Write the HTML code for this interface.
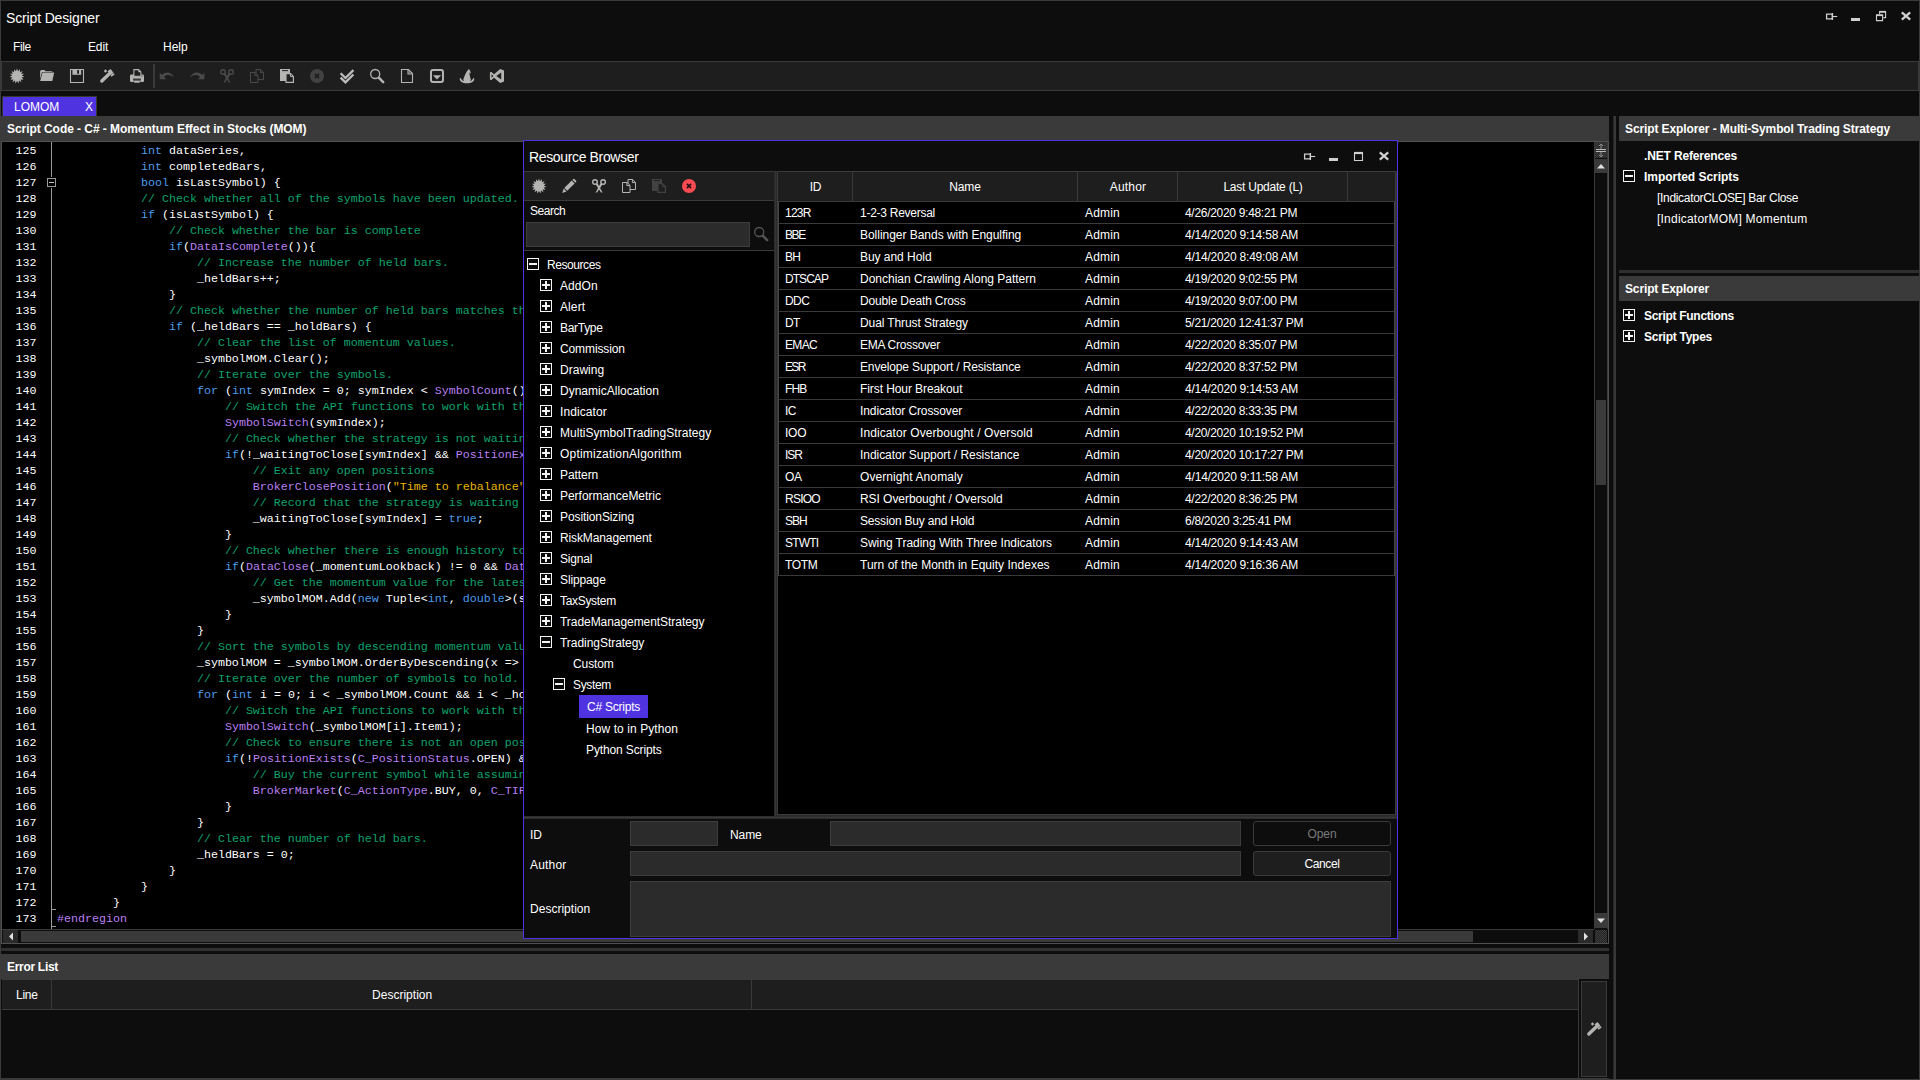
<!DOCTYPE html>
<html lang="en">
<head>
<meta charset="utf-8">
<title>Script Designer</title>
<style>
*{box-sizing:border-box;margin:0;padding:0}
html,body{width:1920px;height:1080px;overflow:hidden;background:#0d0d0d}
body{position:relative;font-family:"Liberation Sans",sans-serif;font-size:12px;color:#fff}
.abs,.abs>*{position:absolute}
#win{position:absolute;left:0;top:0;width:1920px;height:1080px;border:1px solid #3a3a3a;pointer-events:none;z-index:50}
.t{position:absolute;white-space:nowrap;line-height:16px;height:16px}
.b{font-weight:bold}
.box{position:absolute}
.hdr{position:absolute;background:#3a3a3a}
.tb{position:absolute;background:#1e1e1e;border:1px solid #3a3a3a}
.ico{position:absolute;width:16px;height:16px;overflow:visible}
.inp{position:absolute;background:#2b2b2b;border:1px solid #3d3d3d}
.pm{position:absolute;width:12px;height:12px;border:1px solid #f4f4f4;background:#0a0a0a}
.pm i{position:absolute;left:1px;top:4px;width:8px;height:2px;background:#f4f4f4}
.pm b{position:absolute;left:4px;top:1px;width:2px;height:8px;background:#f4f4f4}
#code{position:absolute;left:2px;top:141px;width:1592px;height:788px;background:#000;overflow:hidden;font-family:"Liberation Mono",monospace;font-size:11.665px;color:#fff}
#code .ln{position:absolute;left:0;height:16px;line-height:16px;white-space:pre}
#code .n{position:absolute;left:13.5px;width:21px}
#code .c{position:absolute;left:55px}
.k{color:#4c9bea}.m{color:#0ea36c}.f{color:#b97ff0}.s{color:#e8b600}
</style>
</head>
<body>
<!-- title bar -->
<div class="t" id="title" style="letter-spacing:-0.147px;left:6px;top:9px;font-size:14px;line-height:18px;height:18px">Script Designer</div>
<!-- menu -->
<div class="t" id="mFile" style="letter-spacing:-0.351px;left:13px;top:39px">File</div>
<div class="t" id="mEdit" style="letter-spacing:-0.145px;left:88px;top:39px">Edit</div>
<div class="t" id="mHelp" style="letter-spacing:0.017px;left:163px;top:39px">Help</div>
<!-- main toolbar -->
<div class="tb" style="left:1px;top:61px;width:1918px;height:30px"></div>
<div class="box" style="left:153px;top:64px;width:2px;height:24px;background:#3a3a3a"></div>
<!-- tab -->
<div class="box" style="left:2px;top:96px;width:95px;height:20px;background:#5033e0;border:1px solid #38382e;border-bottom:0"></div>
<div class="t" id="tabL" style="letter-spacing:-0.010px;left:14px;top:99px">LOMOM</div>
<div class="t" id="tabX" style="letter-spacing:-0.938px;left:85px;top:99px">X</div>
<!-- script code header -->
<div class="hdr" style="left:1px;top:116px;width:1608px;height:25px"></div>
<div class="t b" id="hCode" style="letter-spacing:-0.050px;left:7px;top:121px">Script Code - C# - Momentum Effect in Stocks (MOM)</div>
<!-- right panel headers -->
<div class="hdr" style="left:1619px;top:116px;width:300px;height:25px"></div>
<div class="t b" id="hExp1" style="letter-spacing:-0.107px;left:1625px;top:121px">Script Explorer - Multi-Symbol Trading Strategy</div>
<div class="t b" id="rNet" style="letter-spacing:-0.158px;left:1644px;top:148px">.NET References</div>
<div class="pm" style="left:1623px;top:170px"><i></i></div>
<div class="t b" id="rImp" style="letter-spacing:-0.022px;left:1644px;top:169px">Imported Scripts</div>
<div class="t" id="rI1" style="letter-spacing:-0.318px;left:1657px;top:190px">[IndicatorCLOSE] Bar Close</div>
<div class="t" id="rI2" style="letter-spacing:0.216px;left:1657px;top:211px">[IndicatorMOM] Momentum</div>
<div class="box" style="left:1619px;top:270px;width:300px;height:3px;background:#2e2e2e"></div>
<div class="hdr" style="left:1619px;top:276px;width:300px;height:25px"></div>
<div class="t b" id="hExp2" style="letter-spacing:-0.135px;left:1625px;top:281px">Script Explorer</div>
<div class="pm" style="left:1623px;top:309px"><i></i><b></b></div>
<div class="t b" id="rFn" style="letter-spacing:-0.292px;left:1644px;top:308px">Script Functions</div>
<div class="pm" style="left:1623px;top:330px"><i></i><b></b></div>
<div class="t b" id="rTy" style="letter-spacing:-0.262px;left:1644px;top:329px">Script Types</div>
<!-- vertical splitter -->
<div class="box" style="left:1613px;top:116px;width:1px;height:963px;background:#262626"></div>
<div class="box" style="left:1614px;top:116px;width:2px;height:963px;background:#383838"></div>
<!-- horizontal splitter -->
<div class="box" style="left:1px;top:948px;width:1608px;height:3px;background:#303030"></div>
<!-- error list -->
<div class="hdr" style="left:1px;top:954px;width:1608px;height:25px"></div>
<div class="t b" id="hErr" style="letter-spacing:-0.302px;left:7px;top:959px">Error List</div>
<div class="box" style="left:2px;top:979px;width:1577px;height:31px;background:#1e1e1e;border-top:1px solid #3c3c3c;border-bottom:1px solid #3a3a3a;border-right:1px solid #3a3a3a"></div>
<div class="box" style="left:1578px;top:979px;width:1px;height:100px;background:#3a3a3a"></div>
<div class="box" style="left:51px;top:980px;width:1px;height:29px;background:#3a3a3a"></div>
<div class="box" style="left:751px;top:980px;width:1px;height:29px;background:#3a3a3a"></div>
<div class="t" id="eLine" style="letter-spacing:-0.270px;left:16px;top:987px">Line</div>
<div class="t" id="eDesc" style="letter-spacing:0.020px;left:372px;top:987px">Description</div>
<div class="box" style="left:1581px;top:981px;width:26px;height:96px;background:#1e1e1e;border:1px solid #3a3a3a"></div>
<div class="box" style="left:1px;top:1078px;width:1608px;height:1px;background:#3a3a3a"></div>
<div id="code">
<div class="box" style="left:49px;top:0;width:1px;height:788px;background:#9a9a9a"></div>
<div class="box" style="left:45px;top:37px;width:9px;height:9px;border:1px solid #9a9a9a;background:#000;box-shadow:0 0 0 1px #000"><div class="box" style="left:1px;top:3px;width:5px;height:1px;background:#c8c8c8"></div></div>
<div class="box" style="left:50px;top:768px;width:4px;height:1px;background:#9a9a9a"></div>
<div class="box" style="left:50px;top:785px;width:4px;height:1px;background:#9a9a9a"></div>
<div class="ln" style="top:2px"><span class="n">125</span><span class="c">            <span class="k">int</span> dataSeries,</span></div>
<div class="ln" style="top:18px"><span class="n">126</span><span class="c">            <span class="k">int</span> completedBars,</span></div>
<div class="ln" style="top:34px"><span class="n">127</span><span class="c">            <span class="k">bool</span> isLastSymbol) {</span></div>
<div class="ln" style="top:50px"><span class="n">128</span><span class="c">            <span class="m">// Check whether all of the symbols have been updated.</span></span></div>
<div class="ln" style="top:66px"><span class="n">129</span><span class="c">            <span class="k">if</span> (isLastSymbol) {</span></div>
<div class="ln" style="top:82px"><span class="n">130</span><span class="c">                <span class="m">// Check whether the bar is complete</span></span></div>
<div class="ln" style="top:98px"><span class="n">131</span><span class="c">                <span class="k">if</span>(<span class="f">DataIsComplete</span>()){</span></div>
<div class="ln" style="top:114px"><span class="n">132</span><span class="c">                    <span class="m">// Increase the number of held bars.</span></span></div>
<div class="ln" style="top:130px"><span class="n">133</span><span class="c">                    _heldBars++;</span></div>
<div class="ln" style="top:146px"><span class="n">134</span><span class="c">                }</span></div>
<div class="ln" style="top:162px"><span class="n">135</span><span class="c">                <span class="m">// Check whether the number of held bars matches the hold period.</span></span></div>
<div class="ln" style="top:178px"><span class="n">136</span><span class="c">                <span class="k">if</span> (_heldBars == _holdBars) {</span></div>
<div class="ln" style="top:194px"><span class="n">137</span><span class="c">                    <span class="m">// Clear the list of momentum values.</span></span></div>
<div class="ln" style="top:210px"><span class="n">138</span><span class="c">                    _symbolMOM.Clear();</span></div>
<div class="ln" style="top:226px"><span class="n">139</span><span class="c">                    <span class="m">// Iterate over the symbols.</span></span></div>
<div class="ln" style="top:242px"><span class="n">140</span><span class="c">                    <span class="k">for</span> (<span class="k">int</span> symIndex = 0; symIndex &lt; <span class="f">SymbolCount</span>(); symIndex++) {</span></div>
<div class="ln" style="top:258px"><span class="n">141</span><span class="c">                        <span class="m">// Switch the API functions to work with the current symbol.</span></span></div>
<div class="ln" style="top:274px"><span class="n">142</span><span class="c">                        <span class="f">SymbolSwitch</span>(symIndex);</span></div>
<div class="ln" style="top:290px"><span class="n">143</span><span class="c">                        <span class="m">// Check whether the strategy is not waiting to close a position.</span></span></div>
<div class="ln" style="top:306px"><span class="n">144</span><span class="c">                        <span class="k">if</span>(!_waitingToClose[symIndex] &amp;&amp; <span class="f">PositionExists</span>(<span class="f">C_PositionStatus</span>.OPEN)) {</span></div>
<div class="ln" style="top:322px"><span class="n">145</span><span class="c">                            <span class="m">// Exit any open positions</span></span></div>
<div class="ln" style="top:338px"><span class="n">146</span><span class="c">                            <span class="f">BrokerClosePosition</span>(<span class="s">"Time to rebalance"</span>);</span></div>
<div class="ln" style="top:354px"><span class="n">147</span><span class="c">                            <span class="m">// Record that the strategy is waiting to close.</span></span></div>
<div class="ln" style="top:370px"><span class="n">148</span><span class="c">                            _waitingToClose[symIndex] = <span class="k">true</span>;</span></div>
<div class="ln" style="top:386px"><span class="n">149</span><span class="c">                        }</span></div>
<div class="ln" style="top:402px"><span class="n">150</span><span class="c">                        <span class="m">// Check whether there is enough history to calculate momentum.</span></span></div>
<div class="ln" style="top:418px"><span class="n">151</span><span class="c">                        <span class="k">if</span>(<span class="f">DataClose</span>(_momentumLookback) != 0 &amp;&amp; <span class="f">DataClose</span>(0) != 0) {</span></div>
<div class="ln" style="top:434px"><span class="n">152</span><span class="c">                            <span class="m">// Get the momentum value for the latest bar.</span></span></div>
<div class="ln" style="top:450px"><span class="n">153</span><span class="c">                            _symbolMOM.Add(<span class="k">new</span> Tuple&lt;<span class="k">int</span>, <span class="k">double</span>&gt;(symIndex, <span class="f">IndicatorMOM</span>()));</span></div>
<div class="ln" style="top:466px"><span class="n">154</span><span class="c">                        }</span></div>
<div class="ln" style="top:482px"><span class="n">155</span><span class="c">                    }</span></div>
<div class="ln" style="top:498px"><span class="n">156</span><span class="c">                    <span class="m">// Sort the symbols by descending momentum values.</span></span></div>
<div class="ln" style="top:514px"><span class="n">157</span><span class="c">                    _symbolMOM = _symbolMOM.OrderByDescending(x =&gt; x.Item2).ToList();</span></div>
<div class="ln" style="top:530px"><span class="n">158</span><span class="c">                    <span class="m">// Iterate over the number of symbols to hold.</span></span></div>
<div class="ln" style="top:546px"><span class="n">159</span><span class="c">                    <span class="k">for</span> (<span class="k">int</span> i = 0; i &lt; _symbolMOM.Count &amp;&amp; i &lt; _holdCount; i++) {</span></div>
<div class="ln" style="top:562px"><span class="n">160</span><span class="c">                        <span class="m">// Switch the API functions to work with the current symbol.</span></span></div>
<div class="ln" style="top:578px"><span class="n">161</span><span class="c">                        <span class="f">SymbolSwitch</span>(_symbolMOM[i].Item1);</span></div>
<div class="ln" style="top:594px"><span class="n">162</span><span class="c">                        <span class="m">// Check to ensure there is not an open position.</span></span></div>
<div class="ln" style="top:610px"><span class="n">163</span><span class="c">                        <span class="k">if</span>(!<span class="f">PositionExists</span>(<span class="f">C_PositionStatus</span>.OPEN) &amp;&amp; !<span class="f">OrderExists</span>()) {</span></div>
<div class="ln" style="top:626px"><span class="n">164</span><span class="c">                            <span class="m">// Buy the current symbol while assuming equal allocation.</span></span></div>
<div class="ln" style="top:642px"><span class="n">165</span><span class="c">                            <span class="f">BrokerMarket</span>(<span class="f">C_ActionType</span>.BUY, 0, <span class="f">C_TIF</span>.DAY, <span class="s">"Buy"</span>);</span></div>
<div class="ln" style="top:658px"><span class="n">166</span><span class="c">                        }</span></div>
<div class="ln" style="top:674px"><span class="n">167</span><span class="c">                    }</span></div>
<div class="ln" style="top:690px"><span class="n">168</span><span class="c">                    <span class="m">// Clear the number of held bars.</span></span></div>
<div class="ln" style="top:706px"><span class="n">169</span><span class="c">                    _heldBars = 0;</span></div>
<div class="ln" style="top:722px"><span class="n">170</span><span class="c">                }</span></div>
<div class="ln" style="top:738px"><span class="n">171</span><span class="c">            }</span></div>
<div class="ln" style="top:754px"><span class="n">172</span><span class="c">        }</span></div>
<div class="ln" style="top:770px"><span class="n">173</span><span class="c"><span class="f">#endregion</span></span></div>
</div>
<!-- code panel border -->
<div class="box" style="left:1px;top:141px;width:1608px;height:803px;border:1px solid #505050"></div>
<!-- vertical scrollbar -->
<div class="box" style="left:1594px;top:142px;width:14px;height:787px;background:#0d0d0d;border-left:1px solid #3a3a3a;border-right:1px solid #3a3a3a"></div>
<div class="box" style="left:1595px;top:142px;width:12px;height:16px;background:repeating-conic-gradient(#3c3c3c 0 25%,#2a2a2a 0 50%) 0 0/2px 2px"></div>
<svg class="box" style="left:1595px;top:142px" width="12" height="16" viewBox="0 0 12 16"><path d="M1 7.5h10M1 9.5h10" stroke="#b8b8b8" stroke-width="1" fill="none"/><path d="M6 2v5M6 10v5M4 4l2-2 2 2M4 13l2 2 2-2" stroke="#8a8a8a" stroke-width="1" fill="none"/></svg>
<div class="box" style="left:1595px;top:159px;width:12px;height:14px;background:#3a3a3a"></div>
<svg class="box" style="left:1595px;top:159px" width="12" height="14" viewBox="0 0 12 14"><path d="M2 9.5L6 5l4 4.5z" fill="#e0e0e0"/></svg>
<div class="box" style="left:1596px;top:400px;width:10px;height:85px;background:#3a3a3a"></div>
<div class="box" style="left:1595px;top:913px;width:12px;height:15px;background:#3a3a3a"></div>
<svg class="box" style="left:1595px;top:913px" width="12" height="15" viewBox="0 0 12 15"><path d="M2 5.5L6 10l4-4.5z" fill="#e0e0e0"/></svg>
<!-- horizontal scrollbar -->
<div class="box" style="left:2px;top:929px;width:1592px;height:14px;background:#0d0d0d;border-top:1px solid #3a3a3a"></div>
<div class="box" style="left:3px;top:930px;width:15px;height:13px;background:#2a2a2a"></div>
<svg class="box" style="left:3px;top:930px" width="15" height="13" viewBox="0 0 15 13"><path d="M10 2.5L6 6.5l4 4z" fill="#e0e0e0"/></svg>
<div class="box" style="left:21px;top:931px;width:1452px;height:11px;background:#3a3a3a"></div>
<div class="box" style="left:1578px;top:930px;width:15px;height:13px;background:#2a2a2a"></div>
<svg class="box" style="left:1578px;top:930px" width="15" height="13" viewBox="0 0 15 13"><path d="M6 2.5l4 4-4 4z" fill="#e0e0e0"/></svg>
<div class="box" style="left:1595px;top:930px;width:12px;height:13px;background:repeating-conic-gradient(#3c3c3c 0 25%,#242424 0 50%) 0 0/2px 2px"></div>
<!-- Resource Browser dialog -->
<div class="box" style="left:523px;top:140px;width:875px;height:799px;background:#0d0d0d;border:1px solid #5033e0"></div>
<div class="t" id="dTitle" style="letter-spacing:-0.354px;left:529px;top:148px;font-size:14px;line-height:18px;height:18px">Resource Browser</div>
<div class="tb" style="left:524px;top:171px;width:250px;height:30px;border-left:0;border-right:0"></div>
<div class="t" id="dSearch" style="letter-spacing:-0.464px;left:530px;top:203px">Search</div>
<div class="inp" style="left:526px;top:222px;width:224px;height:25px"></div>
<div class="box" style="left:524px;top:250px;width:250px;height:566px;background:#000;border-top:1px solid #3a3a3a"></div>
<div class="box" style="left:774px;top:171px;width:3px;height:645px;background:#2a2a2a"></div>
<div class="box" style="left:775px;top:171px;width:1px;height:645px;background:#353535"></div>
<div class="box" style="left:777px;top:201px;width:619px;height:614px;background:#000;border:1px solid #3a3a3a"></div>
<div class="box" style="left:777px;top:815px;width:620px;height:1px;background:#2a2a2a"></div>
<div class="box" style="left:778px;top:202px;width:1px;height:374px;background:#444"></div>
<div class="box" style="left:777px;top:171px;width:619px;height:31px;background:#1e1e1e;border:1px solid #3a3a3a"></div>
<div class="box" style="left:852px;top:172px;width:1px;height:29px;background:#3a3a3a"></div>
<div class="box" style="left:1077px;top:172px;width:1px;height:29px;background:#3a3a3a"></div>
<div class="box" style="left:1177px;top:172px;width:1px;height:29px;background:#3a3a3a"></div>
<div class="box" style="left:1347px;top:172px;width:1px;height:29px;background:#3a3a3a"></div>
<div class="t th" style="letter-spacing:-0.196px;left:715.5px;top:179px;width:200px;text-align:center">ID</div>
<div class="t th" style="letter-spacing:-0.085px;left:865px;top:179px;width:200px;text-align:center">Name</div>
<div class="t th" style="letter-spacing:0.202px;left:1028px;top:179px;width:200px;text-align:center">Author</div>
<div class="t th" style="letter-spacing:-0.235px;left:1163px;top:179px;width:200px;text-align:center">Last Update (L)</div>
<div class="box" style="left:1394px;top:202px;width:1px;height:374px;background:#444"></div>
<div class="box" style="left:1396px;top:171px;width:1px;height:645px;background:#34342c"></div>
<div class="box" style="left:779px;top:223px;width:615px;height:1px;background:#3a3a3a"></div>
<div class="t td" style="letter-spacing:-0.784px;left:785px;top:205px">123R</div><div class="t td" style="letter-spacing:-0.263px;left:860px;top:205px">1-2-3 Reversal</div><div class="t td" style="letter-spacing:0.159px;left:1085px;top:205px">Admin</div><div class="t td" style="letter-spacing:-0.300px;left:1185px;top:205px">4/26/2020 9:48:21 PM</div>
<div class="box" style="left:779px;top:245px;width:615px;height:1px;background:#3a3a3a"></div>
<div class="t td" style="letter-spacing:-1.396px;left:785px;top:227px">BBE</div><div class="t td" style="letter-spacing:-0.029px;left:860px;top:227px">Bollinger Bands with Engulfing</div><div class="t td" style="letter-spacing:0.159px;left:1085px;top:227px">Admin</div><div class="t td" style="letter-spacing:-0.216px;left:1185px;top:227px">4/14/2020 9:14:58 AM</div>
<div class="box" style="left:779px;top:267px;width:615px;height:1px;background:#3a3a3a"></div>
<div class="t td" style="letter-spacing:-0.637px;left:785px;top:249px">BH</div><div class="t td" style="letter-spacing:-0.045px;left:860px;top:249px">Buy and Hold</div><div class="t td" style="letter-spacing:0.159px;left:1085px;top:249px">Admin</div><div class="t td" style="letter-spacing:-0.216px;left:1185px;top:249px">4/14/2020 8:49:08 AM</div>
<div class="box" style="left:779px;top:289px;width:615px;height:1px;background:#3a3a3a"></div>
<div class="t td" style="letter-spacing:-0.954px;left:785px;top:271px">DTSCAP</div><div class="t td" style="letter-spacing:-0.005px;left:860px;top:271px">Donchian Crawling Along Pattern</div><div class="t td" style="letter-spacing:0.159px;left:1085px;top:271px">Admin</div><div class="t td" style="letter-spacing:-0.300px;left:1185px;top:271px">4/19/2020 9:02:55 PM</div>
<div class="box" style="left:779px;top:311px;width:615px;height:1px;background:#3a3a3a"></div>
<div class="t td" style="letter-spacing:-0.581px;left:785px;top:293px">DDC</div><div class="t td" style="letter-spacing:-0.142px;left:860px;top:293px">Double Death Cross</div><div class="t td" style="letter-spacing:0.159px;left:1085px;top:293px">Admin</div><div class="t td" style="letter-spacing:-0.300px;left:1185px;top:293px">4/19/2020 9:07:00 PM</div>
<div class="box" style="left:779px;top:333px;width:615px;height:1px;background:#3a3a3a"></div>
<div class="t td" style="letter-spacing:-0.649px;left:785px;top:315px">DT</div><div class="t td" style="letter-spacing:-0.097px;left:860px;top:315px">Dual Thrust Strategy</div><div class="t td" style="letter-spacing:0.159px;left:1085px;top:315px">Admin</div><div class="t td" style="letter-spacing:-0.312px;left:1185px;top:315px">5/21/2020 12:41:37 PM</div>
<div class="box" style="left:779px;top:355px;width:615px;height:1px;background:#3a3a3a"></div>
<div class="t td" style="letter-spacing:-0.664px;left:785px;top:337px">EMAC</div><div class="t td" style="letter-spacing:-0.264px;left:860px;top:337px">EMA Crossover</div><div class="t td" style="letter-spacing:0.159px;left:1085px;top:337px">Admin</div><div class="t td" style="letter-spacing:-0.300px;left:1185px;top:337px">4/22/2020 8:35:07 PM</div>
<div class="box" style="left:779px;top:377px;width:615px;height:1px;background:#3a3a3a"></div>
<div class="t td" style="letter-spacing:-1.688px;left:785px;top:359px">ESR</div><div class="t td" style="letter-spacing:-0.146px;left:860px;top:359px">Envelope Support / Resistance</div><div class="t td" style="letter-spacing:0.159px;left:1085px;top:359px">Admin</div><div class="t td" style="letter-spacing:-0.300px;left:1185px;top:359px">4/22/2020 8:37:52 PM</div>
<div class="box" style="left:779px;top:399px;width:615px;height:1px;background:#3a3a3a"></div>
<div class="t td" style="letter-spacing:-0.916px;left:785px;top:381px">FHB</div><div class="t td" style="letter-spacing:-0.084px;left:860px;top:381px">First Hour Breakout</div><div class="t td" style="letter-spacing:0.159px;left:1085px;top:381px">Admin</div><div class="t td" style="letter-spacing:-0.216px;left:1185px;top:381px">4/14/2020 9:14:53 AM</div>
<div class="box" style="left:779px;top:421px;width:615px;height:1px;background:#3a3a3a"></div>
<div class="t td" style="letter-spacing:-0.688px;left:785px;top:403px">IC</div><div class="t td" style="letter-spacing:-0.097px;left:860px;top:403px">Indicator Crossover</div><div class="t td" style="letter-spacing:0.159px;left:1085px;top:403px">Admin</div><div class="t td" style="letter-spacing:-0.300px;left:1185px;top:403px">4/22/2020 8:33:35 PM</div>
<div class="box" style="left:779px;top:443px;width:615px;height:1px;background:#3a3a3a"></div>
<div class="t td" style="letter-spacing:-0.243px;left:785px;top:425px">IOO</div><div class="t td" style="letter-spacing:0.086px;left:860px;top:425px">Indicator Overbought / Oversold</div><div class="t td" style="letter-spacing:0.159px;left:1085px;top:425px">Admin</div><div class="t td" style="letter-spacing:-0.312px;left:1185px;top:425px">4/20/2020 10:19:52 PM</div>
<div class="box" style="left:779px;top:465px;width:615px;height:1px;background:#3a3a3a"></div>
<div class="t td" style="letter-spacing:-1.090px;left:785px;top:447px">ISR</div><div class="t td" style="letter-spacing:-0.050px;left:860px;top:447px">Indicator Support / Resistance</div><div class="t td" style="letter-spacing:0.159px;left:1085px;top:447px">Admin</div><div class="t td" style="letter-spacing:-0.312px;left:1185px;top:447px">4/20/2020 10:17:27 PM</div>
<div class="box" style="left:779px;top:487px;width:615px;height:1px;background:#3a3a3a"></div>
<div class="t td" style="letter-spacing:-0.278px;left:785px;top:469px">OA</div><div class="t td" style="letter-spacing:0.083px;left:860px;top:469px">Overnight Anomaly</div><div class="t td" style="letter-spacing:0.159px;left:1085px;top:469px">Admin</div><div class="t td" style="letter-spacing:-0.172px;left:1185px;top:469px">4/14/2020 9:11:58 AM</div>
<div class="box" style="left:779px;top:509px;width:615px;height:1px;background:#3a3a3a"></div>
<div class="t td" style="letter-spacing:-0.766px;left:785px;top:491px">RSIOO</div><div class="t td" style="letter-spacing:-0.057px;left:860px;top:491px">RSI Overbought / Oversold</div><div class="t td" style="letter-spacing:0.159px;left:1085px;top:491px">Admin</div><div class="t td" style="letter-spacing:-0.300px;left:1185px;top:491px">4/22/2020 8:36:25 PM</div>
<div class="box" style="left:779px;top:531px;width:615px;height:1px;background:#3a3a3a"></div>
<div class="t td" style="letter-spacing:-0.973px;left:785px;top:513px">SBH</div><div class="t td" style="letter-spacing:-0.187px;left:860px;top:513px">Session Buy and Hold</div><div class="t td" style="letter-spacing:0.159px;left:1085px;top:513px">Admin</div><div class="t td" style="letter-spacing:-0.287px;left:1185px;top:513px">6/8/2020 3:25:41 PM</div>
<div class="box" style="left:779px;top:553px;width:615px;height:1px;background:#3a3a3a"></div>
<div class="t td" style="letter-spacing:-0.786px;left:785px;top:535px">STWTI</div><div class="t td" style="letter-spacing:-0.032px;left:860px;top:535px">Swing Trading With Three Indicators</div><div class="t td" style="letter-spacing:0.159px;left:1085px;top:535px">Admin</div><div class="t td" style="letter-spacing:-0.216px;left:1185px;top:535px">4/14/2020 9:14:43 AM</div>
<div class="box" style="left:779px;top:575px;width:615px;height:1px;background:#3a3a3a"></div>
<div class="t td" style="letter-spacing:-0.346px;left:785px;top:557px">TOTM</div><div class="t td" style="letter-spacing:0.018px;left:860px;top:557px">Turn of the Month in Equity Indexes</div><div class="t td" style="letter-spacing:0.159px;left:1085px;top:557px">Admin</div><div class="t td" style="letter-spacing:-0.216px;left:1185px;top:557px">4/14/2020 9:16:36 AM</div>
<div class="pm" style="left:527px;top:258px"><i></i></div>
<div class="t tr" style="letter-spacing:-0.434px;left:547px;top:257px">Resources</div>
<div class="pm" style="left:540px;top:279px"><i></i><b></b></div>
<div class="t tr" style="letter-spacing:0.068px;left:560px;top:278px">AddOn</div>
<div class="pm" style="left:540px;top:300px"><i></i><b></b></div>
<div class="t tr" style="letter-spacing:0.096px;left:560px;top:299px">Alert</div>
<div class="pm" style="left:540px;top:321px"><i></i><b></b></div>
<div class="t tr" style="letter-spacing:-0.304px;left:560px;top:320px">BarType</div>
<div class="pm" style="left:540px;top:342px"><i></i><b></b></div>
<div class="t tr" style="letter-spacing:-0.111px;left:560px;top:341px">Commission</div>
<div class="pm" style="left:540px;top:363px"><i></i><b></b></div>
<div class="t tr" style="letter-spacing:0.014px;left:560px;top:362px">Drawing</div>
<div class="pm" style="left:540px;top:384px"><i></i><b></b></div>
<div class="t tr" style="letter-spacing:0.009px;left:560px;top:383px">DynamicAllocation</div>
<div class="pm" style="left:540px;top:405px"><i></i><b></b></div>
<div class="t tr" style="letter-spacing:0.093px;left:560px;top:404px">Indicator</div>
<div class="pm" style="left:540px;top:426px"><i></i><b></b></div>
<div class="t tr" style="letter-spacing:0.036px;left:560px;top:425px">MultiSymbolTradingStrategy</div>
<div class="pm" style="left:540px;top:447px"><i></i><b></b></div>
<div class="t tr" style="letter-spacing:0.201px;left:560px;top:446px">OptimizationAlgorithm</div>
<div class="pm" style="left:540px;top:468px"><i></i><b></b></div>
<div class="t tr" style="letter-spacing:-0.073px;left:560px;top:467px">Pattern</div>
<div class="pm" style="left:540px;top:489px"><i></i><b></b></div>
<div class="t tr" style="letter-spacing:-0.028px;left:560px;top:488px">PerformanceMetric</div>
<div class="pm" style="left:540px;top:510px"><i></i><b></b></div>
<div class="t tr" style="letter-spacing:-0.099px;left:560px;top:509px">PositionSizing</div>
<div class="pm" style="left:540px;top:531px"><i></i><b></b></div>
<div class="t tr" style="letter-spacing:-0.120px;left:560px;top:530px">RiskManagement</div>
<div class="pm" style="left:540px;top:552px"><i></i><b></b></div>
<div class="t tr" style="letter-spacing:-0.204px;left:560px;top:551px">Signal</div>
<div class="pm" style="left:540px;top:573px"><i></i><b></b></div>
<div class="t tr" style="letter-spacing:-0.123px;left:560px;top:572px">Slippage</div>
<div class="pm" style="left:540px;top:594px"><i></i><b></b></div>
<div class="t tr" style="letter-spacing:-0.319px;left:560px;top:593px">TaxSystem</div>
<div class="pm" style="left:540px;top:615px"><i></i><b></b></div>
<div class="t tr" style="letter-spacing:-0.055px;left:560px;top:614px">TradeManagementStrategy</div>
<div class="pm" style="left:540px;top:636px"><i></i></div>
<div class="t tr" style="letter-spacing:-0.042px;left:560px;top:635px">TradingStrategy</div>
<div class="t tr" style="letter-spacing:-0.104px;left:573px;top:656px">Custom</div>
<div class="pm" style="left:553px;top:678px"><i></i></div>
<div class="t tr" style="letter-spacing:-0.350px;left:573px;top:677px">System</div>
<div class="box" style="left:579px;top:695px;width:69px;height:23px;background:#5033e0"></div>
<div class="t tr" style="letter-spacing:-0.234px;left:587px;top:699px">C# Scripts</div>
<div class="t tr" style="letter-spacing:0.082px;left:586px;top:721px">How to in Python</div>
<div class="t tr" style="letter-spacing:-0.122px;left:586px;top:742px">Python Scripts</div>
<div class="box" style="left:524px;top:816px;width:873px;height:3px;background:#2c2c2c"></div>
<div class="box" style="left:524px;top:817px;width:873px;height:1px;background:#383838"></div>
<div class="t" id="fID" style="letter-spacing:-0.196px;left:530px;top:827px">ID</div>
<div class="inp" style="left:630px;top:821px;width:88px;height:25px"></div>
<div class="t" id="fName" style="letter-spacing:-0.085px;left:730px;top:827px">Name</div>
<div class="inp" style="left:830px;top:821px;width:411px;height:25px"></div>
<div class="box" style="left:1253px;top:821px;width:138px;height:25px;border:1px solid #3a3a3a;border-radius:3px;background:#0d0d0d"></div>
<div class="t" id="bOpen" style="letter-spacing:-0.051px;left:1253px;top:826px;width:138px;text-align:center;color:#7a7a7a">Open</div>
<div class="t" id="fAuthor" style="letter-spacing:0.202px;left:530px;top:857px">Author</div>
<div class="inp" style="left:630px;top:851px;width:611px;height:25px"></div>
<div class="box" style="left:1253px;top:851px;width:138px;height:25px;border:1px solid #3a3a3a;border-radius:3px;background:#1e1e1e"></div>
<div class="t" id="bCancel" style="letter-spacing:-0.387px;left:1253px;top:856px;width:138px;text-align:center">Cancel</div>
<div class="t" id="fDesc" style="letter-spacing:0.020px;left:530px;top:901px">Description</div>
<div class="inp" style="left:630px;top:881px;width:761px;height:56px"></div>
<!-- toolbar icons -->
<svg class="ico" style="left:9px;top:68px" viewBox="0 0 16 16"><polygon points="8.00,0.60 9.02,3.31 11.05,1.25 10.88,4.14 13.57,3.08 12.24,5.65 15.13,5.78 12.87,7.59 15.46,8.88 12.66,9.61 14.50,11.85 11.64,11.38 12.41,14.17 9.99,12.58 9.56,15.44 8.00,13.00 6.44,15.44 6.01,12.58 3.59,14.17 4.36,11.38 1.50,11.85 3.34,9.61 0.54,8.88 3.13,7.59 0.87,5.78 3.76,5.65 2.43,3.08 5.12,4.14 4.95,1.25 6.98,3.31" fill="#b4b4b2"/></svg>
<svg class="ico" style="left:39px;top:68px" viewBox="0 0 16 16"><path d="M1.1 3.6Q1.1 2.1 2.5 2.1H5.4L6.7 3.2H12.4Q13.6 3.2 13.6 4.1H3L1.1 11Z" fill="#b4b4b2"/><path d="M3.5 4.6H15.2L13.3 13H1.2Z" fill="#b4b4b2"/></svg>
<svg class="ico" style="left:69px;top:68px" viewBox="0 0 16 16"><path d="M1.5 1.5H14.5V14.5H1.5Z" fill="none" stroke="#b4b4b2" stroke-width="1.1"/><rect x="3.4" y="1.5" width="8.8" height="5.3" fill="#b4b4b2"/><rect x="8.2" y="2" width="1.8" height="3.8" fill="#1e1e1e"/></svg>
<svg class="ico" style="left:99px;top:68px" viewBox="0 0 16 16"><path d="M2.8 13L10.4 5.7" stroke="#b4b4b2" stroke-width="3.3" stroke-linecap="round" fill="none"/><path d="M10.1 2.2L14.1 7.7" stroke="#b4b4b2" stroke-width="3.9" fill="none"/><path d="M11.5 7.2L14.6 5" stroke="#1e1e1e" stroke-width="0.7" stroke-dasharray="0.9 0.5" fill="none"/><rect x="5.3" y="1.8" width="2.4" height="2.4" transform="rotate(45 6.5 3)" fill="#b4b4b2"/></svg>
<svg class="ico" style="left:129px;top:68px" viewBox="0 0 16 16"><rect x="1" y="6.4" width="14" height="7.6" rx="1.3" fill="#b4b4b2"/><path d="M4.9 8.3V1.6H9.6L11.9 3.9V8.3Z" fill="#1e1e1e" stroke="#b4b4b2" stroke-width="1.1"/><path d="M9.3 1.6V4.3H11.9Z" fill="#b4b4b2"/><rect x="4.1" y="10.6" width="7.8" height="1.2" fill="#1e1e1e"/><rect x="4.9" y="12.3" width="6.2" height="2.7" fill="#b4b4b2" stroke="#1e1e1e" stroke-width="0.5"/><rect x="12.4" y="7.5" width="1" height="1" fill="#1e1e1e"/></svg>
<svg class="ico" style="left:159px;top:68px" viewBox="0 0 16 16"><path d="M0.7 4.7V11.2H7.4L5 8.9C7.2 6.6 11.2 6.2 14.9 9.2C12.3 4 6.6 3.2 3 6.9Z" fill="#4a4a4a"/></svg>
<svg class="ico" style="left:189px;top:68px" viewBox="0 0 16 16"><g transform="translate(16,0) scale(-1,1)"><path d="M0.7 4.7V11.2H7.4L5 8.9C7.2 6.6 11.2 6.2 14.9 9.2C12.3 4 6.6 3.2 3 6.9Z" fill="#4a4a4a"/></g></svg>
<svg class="ico" style="left:219px;top:68px" viewBox="0 0 16 16"><circle cx="4" cy="4" r="2.3" fill="none" stroke="#4a4a4a" stroke-width="1.4"/><circle cx="12.1" cy="4" r="2.3" fill="none" stroke="#4a4a4a" stroke-width="1.4"/><path d="M4.6 6.3L6.7 5.4L11.5 14.5H10Z" fill="#4a4a4a"/><path d="M11.5 6.3L9.4 5.4L4.6 14.5H6.1Z" fill="#4a4a4a"/></svg>
<svg class="ico" style="left:249px;top:68px" viewBox="0 0 16 16"><path d="M7 1.5H11.6L14.5 4.4V11.5H7Z" fill="#1e1e1e" stroke="#4a4a4a" stroke-width="1"/><path d="M11.4 1.5V4.6H14.5" fill="none" stroke="#4a4a4a" stroke-width="1"/><path d="M1.5 4.5H6.1L9 7.4V14.5H1.5Z" fill="#1e1e1e" stroke="#4a4a4a" stroke-width="1"/><path d="M5.9 4.5V7.6H9" fill="none" stroke="#4a4a4a" stroke-width="1"/></svg>
<svg class="ico" style="left:279px;top:68px" viewBox="0 0 16 16"><rect x="1" y="1" width="10" height="12" fill="#b4b4b2"/><rect x="3" y="2.1" width="6" height="1" fill="#1e1e1e"/><path d="M7 5.6H11.6L14.4 8.4V14.4H7Z" fill="#1e1e1e" stroke="#b4b4b2" stroke-width="1.2"/><path d="M11.4 5.6V8.6H14.4" fill="none" stroke="#b4b4b2" stroke-width="1"/></svg>
<svg class="ico" style="left:309px;top:68px" viewBox="0 0 16 16"><circle cx="8" cy="8" r="7" fill="#424242"/><path d="M5.9 5.9L10.1 10.1M10.1 5.9L5.9 10.1" stroke="#1e1e1e" stroke-width="1.7" fill="none"/></svg>
<svg class="ico" style="left:339px;top:68px" viewBox="0 0 16 16"><path d="M1.6 5.2L6.5 10L14.4 2.1" fill="none" stroke="#bcbcbc" stroke-width="2.3"/><path d="M1.6 9.6L6.5 14.4L14.4 6.5" fill="none" stroke="#bcbcbc" stroke-width="2.3"/></svg>
<svg class="ico" style="left:369px;top:68px" viewBox="0 0 16 16"><circle cx="6.2" cy="6" r="4.5" fill="none" stroke="#b4b4b2" stroke-width="1.3"/><path d="M10 9.9L14.2 14.1" stroke="#b4b4b2" stroke-width="2.5" stroke-linecap="round" fill="none"/></svg>
<svg class="ico" style="left:399px;top:68px" viewBox="0 0 16 16"><path d="M2.5 1.5H9.4L13.5 5.6V14.5H2.5Z" fill="none" stroke="#b4b4b2" stroke-width="1.1"/><path d="M9 1.7V6H13.3" fill="none" stroke="#b4b4b2" stroke-width="1.1"/><path d="M9.6 2.4L12.7 5.5H9.6Z" fill="#b4b4b2" opacity="0.55"/></svg>
<svg class="ico" style="left:429px;top:68px" viewBox="0 0 16 16"><rect x="2" y="2" width="12" height="12" rx="2" fill="none" stroke="#b4b4b2" stroke-width="2"/><path d="M3.8 7.2H12.2L8 11.5Z" fill="#b4b4b2"/></svg>
<svg class="ico" style="left:459px;top:68px" viewBox="0 0 16 16"><path d="M3.8 13.4C5 8.6 7 3.4 9.9 0.9C11.2 2 11.6 3.8 11.7 5.8L10.3 4.6C10.8 8.4 11.6 11 12.4 13.4Q8 15 3.8 13.4Z" fill="#b4b4b2"/><path d="M0.8 10.4C0.2 13 3.6 15.3 8 15.3C12.4 15.3 15.8 13 15.2 10.4C15.1 10 14.6 9.9 14.3 10.2C13.6 11.9 11.2 12.9 8 12.9C4.8 12.9 2.4 11.9 1.7 10.2C1.4 9.9 0.9 10 0.8 10.4Z" fill="#b4b4b2"/><path d="M3 11.6C3.5 12.1 4 12.4 4.7 12.6M13 11.6C12.5 12.1 12 12.4 11.3 12.6" fill="none" stroke="#1e1e1e" stroke-width="0.8"/></svg>
<svg class="ico" style="left:489px;top:68px" viewBox="0 0 16 16"><path fill-rule="evenodd" d="M11.2 1L15 2.6V13.4L11.2 15L5 9.7L2.2 12.2L0.9 11.5V4.5L2.2 3.8L5 6.3ZM12.2 4.4L7.3 8L12.2 11.6ZM2.5 6.2V9.8L4.4 8Z" fill="#b4b4b2"/></svg>
<svg class="ico" style="left:531px;top:178px" viewBox="0 0 16 16"><polygon points="8.00,0.60 9.02,3.31 11.05,1.25 10.88,4.14 13.57,3.08 12.24,5.65 15.13,5.78 12.87,7.59 15.46,8.88 12.66,9.61 14.50,11.85 11.64,11.38 12.41,14.17 9.99,12.58 9.56,15.44 8.00,13.00 6.44,15.44 6.01,12.58 3.59,14.17 4.36,11.38 1.50,11.85 3.34,9.61 0.54,8.88 3.13,7.59 0.87,5.78 3.76,5.65 2.43,3.08 5.12,4.14 4.95,1.25 6.98,3.31" fill="#b4b4b2"/></svg>
<svg class="ico" style="left:561px;top:178px" viewBox="0 0 16 16"><path d="M3.3 9.9L10.7 2.5L13.6 5.4L6.2 12.8Z" fill="#b4b4b2"/><path d="M11.4 1.8L12.4 0.9Q12.9 0.5 13.4 0.9L15.2 2.7Q15.6 3.2 15.2 3.7L14.3 4.7Z" fill="#b4b4b2"/><path d="M2.7 10.6L5.5 13.4L1.2 15Z" fill="#b4b4b2"/></svg>
<svg class="ico" style="left:591px;top:178px" viewBox="0 0 16 16"><circle cx="4" cy="4" r="2.3" fill="none" stroke="#b4b4b2" stroke-width="1.4"/><circle cx="12.1" cy="4" r="2.3" fill="none" stroke="#b4b4b2" stroke-width="1.4"/><path d="M4.6 6.3L6.7 5.4L11.5 14.5H10Z" fill="#b4b4b2"/><path d="M11.5 6.3L9.4 5.4L4.6 14.5H6.1Z" fill="#b4b4b2"/></svg>
<svg class="ico" style="left:621px;top:178px" viewBox="0 0 16 16"><path d="M7 1.5H11.6L14.5 4.4V11.5H7Z" fill="#1e1e1e" stroke="#b4b4b2" stroke-width="1"/><path d="M11.4 1.5V4.6H14.5" fill="none" stroke="#b4b4b2" stroke-width="1"/><path d="M1.5 4.5H6.1L9 7.4V14.5H1.5Z" fill="#1e1e1e" stroke="#b4b4b2" stroke-width="1"/><path d="M5.9 4.5V7.6H9" fill="none" stroke="#b4b4b2" stroke-width="1"/></svg>
<svg class="ico" style="left:651px;top:178px" viewBox="0 0 16 16"><rect x="1" y="1" width="10" height="12" fill="#424242"/><rect x="3" y="2.1" width="6" height="1" fill="#1e1e1e"/><path d="M7 5.6H11.6L14.4 8.4V14.4H7Z" fill="#1e1e1e" stroke="#424242" stroke-width="1.2"/><path d="M11.4 5.6V8.6H14.4" fill="none" stroke="#424242" stroke-width="1"/></svg>
<svg class="ico" style="left:681px;top:178px" viewBox="0 0 16 16"><circle cx="8" cy="8" r="7" fill="#fb4b52"/><path d="M5.9 5.9L10.1 10.1M10.1 5.9L5.9 10.1" stroke="#241015" stroke-width="1.7" fill="none"/></svg>
<svg class="ico" style="left:753px;top:226px" viewBox="0 0 16 16"><circle cx="6.2" cy="6" r="4.5" fill="none" stroke="#555" stroke-width="1.3"/><path d="M10 9.9L14.2 14.1" stroke="#555" stroke-width="2.5" stroke-linecap="round" fill="none"/></svg>
<svg class="ico" style="left:1586px;top:1020.5px" viewBox="0 0 16 16"><path d="M2.8 13L10.4 5.7" stroke="#b4b4b2" stroke-width="3.3" stroke-linecap="round" fill="none"/><path d="M10.1 2.2L14.1 7.7" stroke="#b4b4b2" stroke-width="3.9" fill="none"/><path d="M11.5 7.2L14.6 5" stroke="#1e1e1e" stroke-width="0.7" stroke-dasharray="0.9 0.5" fill="none"/><rect x="5.3" y="1.8" width="2.4" height="2.4" transform="rotate(45 6.5 3)" fill="#b4b4b2"/></svg>
<svg class="box" style="left:1820px;top:6px" width="96" height="20" viewBox="1820 6 96 20"><path d="M1826.6 14.1H1832.4V18.9H1826.6Z" fill="none" stroke="#cfcfcf" stroke-width="1.3"/><path d="M1832.4 13V20" stroke="#cfcfcf" stroke-width="1.3"/><path d="M1833 16.5H1837.3" stroke="#cfcfcf" stroke-width="1.1"/><rect x="1851" y="18" width="9" height="3" fill="#cfcfcf"/><path d="M1879.6 14V12H1885.6V17.6H1883.4" fill="none" stroke="#cfcfcf" stroke-width="1.1"/><path d="M1879.2 11.7H1886" stroke="#cfcfcf" stroke-width="1.6"/><path d="M1876.5 15.4H1882.6V20.6H1876.5Z" fill="none" stroke="#cfcfcf" stroke-width="1.1"/><path d="M1876 15.2H1883.1" stroke="#cfcfcf" stroke-width="1.8"/><path d="M1901.8 12.3L1910.2 19.7M1910.2 12.3L1901.8 19.7" stroke="#cfcfcf" stroke-width="2.3" fill="none"/></svg>
<svg class="box" style="left:1300px;top:146px" width="94" height="20" viewBox="1300 146 94 20"><path d="M1304.6 154.1H1310.4V158.9H1304.6Z" fill="none" stroke="#cfcfcf" stroke-width="1.3"/><path d="M1310.4 153V160" stroke="#cfcfcf" stroke-width="1.3"/><path d="M1311 156.5H1315.2" stroke="#cfcfcf" stroke-width="1.1"/><rect x="1329" y="158" width="9" height="3" fill="#cfcfcf"/><path d="M1354.5 153H1362.5V160.5H1354.5Z" fill="none" stroke="#cfcfcf" stroke-width="1.1"/><path d="M1354 153H1363" stroke="#cfcfcf" stroke-width="2.2"/><path d="M1379.8 152.3L1388.2 159.7M1388.2 152.3L1379.8 159.7" stroke="#cfcfcf" stroke-width="2.3" fill="none"/></svg>
<div id="win"></div>
</body>
</html>
